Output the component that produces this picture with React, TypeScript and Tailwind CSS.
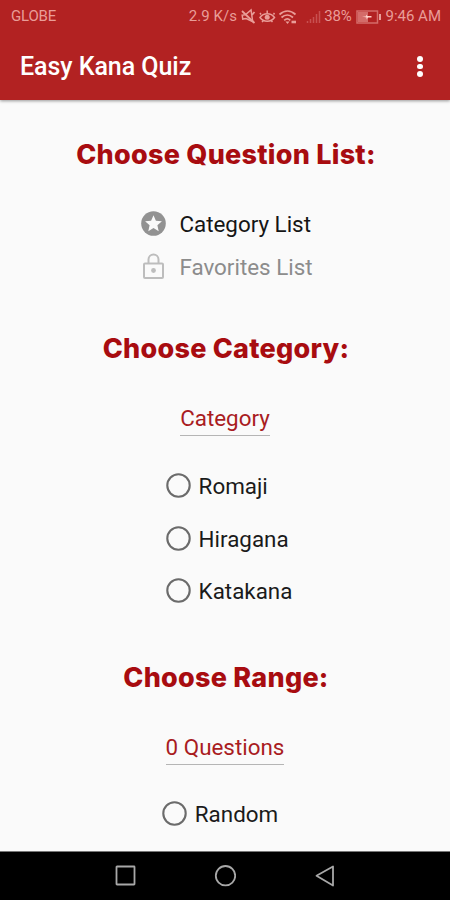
import React, { useState } from "react";

interface RadioOptionProps {
  label: string;
  checked: boolean;
  onSelect: () => void;
  className?: string;
}

const SectionTitle: React.FC<{ children: React.ReactNode; className: string }> = ({
  children,
  className,
}) => (
  <h2
    className={`ml-[2px] h-9 whitespace-nowrap text-center font-['Inter'] text-[27px] font-extrabold leading-9 tracking-[0.25px] text-[#a80c10] ${className}`}
  >
    {children}
  </h2>
);

const RadioOption: React.FC<RadioOptionProps> = ({
  label,
  checked,
  onSelect,
  className = "",
}) => (
  <button
    onClick={onSelect}
    className={`flex h-[52.5px] items-center gap-[8px] text-[22.4px] leading-none text-[#1a1a1a] ${className}`}
  >
    <svg width="25" height="25" viewBox="0 0 25 25" fill="none" className="mb-px">
      <circle cx="12.5" cy="12.5" r="11.2" stroke="#6b6b6b" strokeWidth="2.1" />
      {checked && <circle cx="12.5" cy="12.5" r="6" fill="#b22222" />}
    </svg>
    <span className="whitespace-nowrap">{label}</span>
  </button>
);

const StatusIcons: React.FC = () => (
  <svg width="81" height="18" viewBox="0 0 81 18" fill="none" stroke="#e99d98">
    {/* muted speaker */}
    <path d="M1.500 6.500h3.500l6-4v12l-6-4H1.500z" strokeWidth="1.500" transform="rotate(-8 6 9)" />
    <path d="M1 3l12.500 12M13.500 4l-2.500 3" strokeWidth="1.800" />
    {/* eye comfort */}
    <path d="M19 9.500c3.500-5 11-5 14.500 0c-3.500 5-11 5-14.500 0zM20 6.500l-1-1.500M32.500 6.500l1-1.500M26.200 5V2.500M22 13l-1 1M30.500 13l1 1" strokeWidth="1.500" />
    <circle cx="26.200" cy="9.300" r="2.500" fill="#e99d98" stroke="none" />
    {/* wifi */}
    <path d="M38.500 6.500c5-4.500 11-4.500 16 0M40.500 9.500c3.500-3.200 8-3.200 11.500 0M43.200 12.300c2-1.800 4.200-1.800 6.100 0" strokeWidth="1.800" />
    <path d="M44.500 13.500h4l-2 2.500z" fill="#e99d98" stroke="none" />
    <path d="M50.500 14h4.500" strokeWidth="2.600" />
    {/* signal */}
    <path d="M66.500 15v-2M69.500 15v-4M72.500 15V9M75.500 15V6M78.500 15V3" stroke="#c85050" strokeWidth="1.500" />
  </svg>
);

const BatteryIcon: React.FC = () => (
  <svg width="26" height="14" viewBox="0 0 26 14" fill="none">
    <rect x="1" y="1" width="20.500" height="12" stroke="#d46c69" strokeWidth="1.500" />
    <path d="M2 2h10v10H2z" fill="#d46c69" />
    <path d="M6 6.500h3.500L11 4.500v1.500h4.500v1.500H12L10.500 9.500V7.500z" fill="#ffd1ca" />
    <path d="M24 4v6" stroke="#e99d98" strokeWidth="2" />
  </svg>
);

export default function App() {
  const [kana, setKana] = useState<string>("");
  const [random, setRandom] = useState<boolean>(false);

  return (
    <div className="flex h-[900px] w-[450px] flex-col overflow-hidden bg-[#fafafa] font-['Roboto',sans-serif]">
      <header className="z-10 h-[100px] shrink-0 bg-[#b22222] shadow-[0_1px_3px_rgba(0,0,0,0.4)]">
        <div className="flex h-[33px] items-center pl-[11px] pr-[9px] text-[15px] leading-none text-[#e99d98]">
          <span className="tracking-[-0.2px]">GLOBE</span>
          <span className="ml-auto mr-[4px] whitespace-nowrap tracking-[0.1px]">2.9 K/s</span>
          <StatusIcons />
          <span className="ml-[2px] whitespace-nowrap tracking-[-0.2px]">38%</span>
          <span className="ml-[5px] mr-[3px]">
            <BatteryIcon />
          </span>
          <span className="whitespace-nowrap">9:46 AM</span>
        </div>
        <div className="flex h-[67px] items-center justify-between pl-5 pr-[27px]">
          <h1 className="whitespace-nowrap text-[25px] font-medium leading-none tracking-[-0.05px] text-white">
            Easy Kana Quiz
          </h1>
          <button aria-label="More options" className="flex flex-col gap-[2px]">
            <span className="size-[5.600px] rounded-full bg-white" />
            <span className="size-[5.600px] rounded-full bg-white" />
            <span className="size-[5.600px] rounded-full bg-white" />
          </button>
        </div>
      </header>

      <main className="flex h-[751px] shrink-0 flex-col items-center">
        <SectionTitle className="mt-[37px]">Choose Question List:</SectionTitle>

        <ul className="mt-[30px] ml-[4px] text-[22.4px] leading-none">
          <li className="flex h-[43px] items-center gap-[13px] text-[#151515]">
            <svg width="25" height="25" viewBox="0 0 25 25" className="mb-[2px]">
              <circle cx="12.500" cy="12.500" r="12.300" fill="#929292" />
              <path
                d="M12.500 4.300l2.400 5.500 6 .5-4.500 4 1.300 5.900-5.200-3.100-5.200 3.100 1.300-5.900-4.500-4 6-.5z"
                fill="#fafafa"
              />
            </svg>
            <span className="whitespace-nowrap">Category List</span>
          </li>
          <li className="flex h-[43px] items-center gap-[13px] text-[#8c8c8c]">
            <svg width="25" height="28" viewBox="0 0 25 28" fill="none" stroke="#bdbdbd" strokeWidth="2" className="mb-[2px]">
              <rect x="3" y="10.500" width="19" height="14.500" rx="1" />
              <path d="M7.500 10.500V6.500a5 5 0 0 1 10 0v4" />
              <circle cx="12.500" cy="17.500" r="2.400" fill="#bdbdbd" stroke="none" />
            </svg>
            <span className="whitespace-nowrap">Favorites List</span>
          </li>
        </ul>

        <SectionTitle className="mt-[42px]">Choose Category:</SectionTitle>
        <button className="mt-[35px] h-[34px] whitespace-nowrap border-b border-[#b5b5b5] text-[22.4px] leading-[31px] text-[#a91c1f]">
          Category
        </button>

        <div className="mt-[24px] ml-[8px] flex flex-col">
          {["Romaji", "Hiragana", "Katakana"].map((label) => (
            <RadioOption
              key={label}
              label={label}
              checked={kana === label}
              onSelect={() => setKana(label)}
            />
          ))}
        </div>

        <SectionTitle className="mt-[42px]">Choose Range:</SectionTitle>
        <button className="mt-[35px] h-[34px] whitespace-nowrap border-b border-[#b5b5b5] text-[22.4px] leading-[32px] text-[#a91c1f]">
          0 Questions
        </button>
        <RadioOption
          label="Random"
          checked={random}
          onSelect={() => setRandom(!random)}
          className="mt-[23px] mr-[10px]"
        />
      </main>

      <nav className="flex h-[49px] shrink-0 items-center justify-center gap-[78px] border-t border-[#777777] bg-black">
        <svg width="22" height="22" viewBox="0 0 22 22" fill="none" stroke="#a8a8a8" strokeWidth="1.800">
          <rect x="2.500" y="1.500" width="18" height="18" rx="0.500" />
        </svg>
        <svg width="22" height="22" viewBox="0 0 22 22" fill="none" stroke="#a8a8a8" strokeWidth="1.800">
          <circle cx="11.500" cy="10.700" r="9.700" />
        </svg>
        <svg width="22" height="22" viewBox="0 0 22 22" fill="none" stroke="#a8a8a8" strokeWidth="1.800" strokeLinejoin="round">
          <path d="M19 1.500v19L2.500 10.800z" />
        </svg>
      </nav>
    </div>
  );
}
